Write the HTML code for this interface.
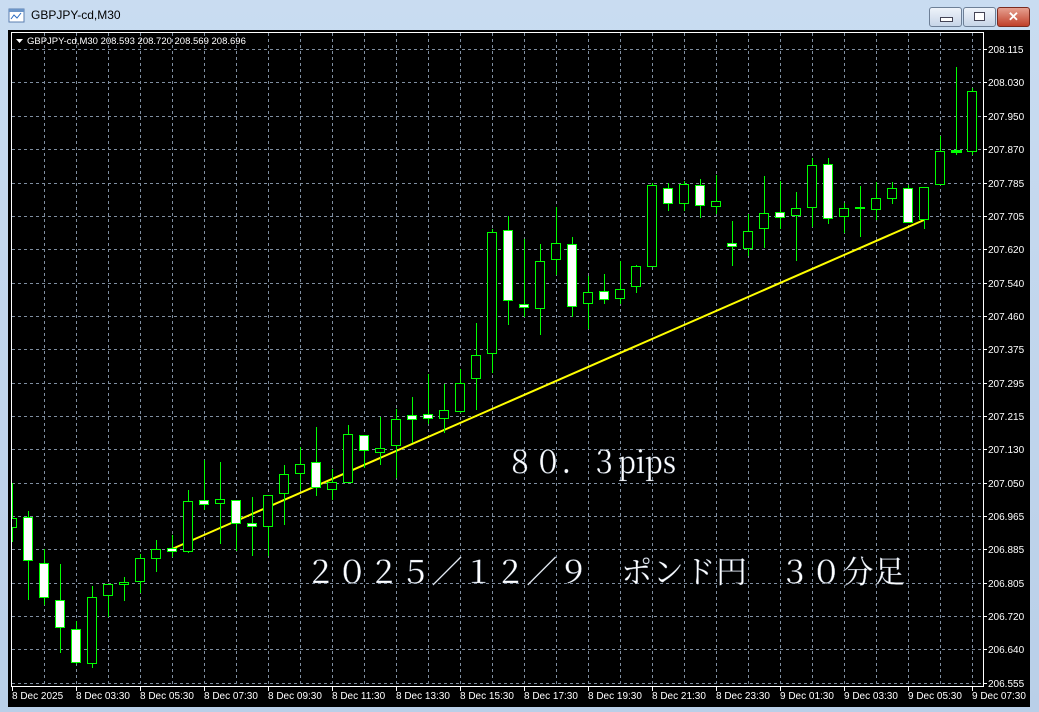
<!DOCTYPE html>
<html><head><meta charset="utf-8"><style>
html,body{margin:0;padding:0;width:1039px;height:712px;overflow:hidden;background:#bfd4ec;font-family:"Liberation Sans",sans-serif}
.win{position:absolute;left:0;top:0;width:1039px;height:712px;background:linear-gradient(#c9dcf1,#b9cfe8)}
.title{position:absolute;left:31px;top:8px;font-size:12px;color:#000}
.btn{position:absolute;top:7px;height:18px;border:1px solid #6d7f96;border-radius:3px;background:linear-gradient(#eef3fa,#c7d5e8)}
svg{position:absolute;left:0;top:0}
</style></head><body>
<div class="win"></div>
<svg width="20" height="20" style="left:8px;top:7px"><rect x="1" y="2" width="15" height="13" fill="#fff" stroke="#5b7fb0"/><rect x="1" y="2" width="15" height="3" fill="#6c95c8"/><path d="M3 12 L6 8 L9 11 L13 6" stroke="#2a6bc1" fill="none"/></svg>
<div class="title">GBPJPY-cd,M30</div>
<div class="btn" style="left:929px;width:31px"><div style="position:absolute;left:10px;top:9px;width:11px;height:3px;background:#fff;border:1px solid #445"></div></div>
<div class="btn" style="left:963px;width:31px"><div style="position:absolute;left:10px;top:4px;width:9px;height:7px;background:#fff;border:1px solid #445"></div></div>
<div class="btn" style="left:997px;width:31px;background:linear-gradient(#e6a090,#c0402a);border-color:#7a2b20;color:#fff;font-weight:bold;font-size:13px;text-align:center;line-height:17px">✕</div>
<svg width="1039" height="712" xmlns="http://www.w3.org/2000/svg">
<rect x="8" y="30" width="1022" height="677" fill="#000"/>
<defs><clipPath id="c"><rect x="12" y="33" width="971" height="653"/></clipPath></defs>
<g stroke="#7f8ea0" stroke-width="1" stroke-dasharray="3,3" fill="none" shape-rendering="crispEdges">
<path d="M12 49.5H983M12 82.5H983M12 116.5H983M12 149.5H983M12 183.5H983M12 216.5H983M12 249.5H983M12 283.5H983M12 316.5H983M12 349.5H983M12 383.5H983M12 416.5H983M12 449.5H983M12 483.5H983M12 516.5H983M12 549.5H983M12 583.5H983M12 616.5H983M12 649.5H983M12 683.5H983"/>
<path d="M44.5 33V686M76.5 33V686M108.5 33V686M140.5 33V686M172.5 33V686M204.5 33V686M236.5 33V686M268.5 33V686M300.5 33V686M332.5 33V686M364.5 33V686M396.5 33V686M428.5 33V686M460.5 33V686M492.5 33V686M524.5 33V686M556.5 33V686M588.5 33V686M620.5 33V686M652.5 33V686M684.5 33V686M716.5 33V686M748.5 33V686M780.5 33V686M812.5 33V686M844.5 33V686M876.5 33V686M908.5 33V686M940.5 33V686M972.5 33V686"/>
</g>
<rect x="11.5" y="32.5" width="972" height="654" fill="none" stroke="#fff" shape-rendering="crispEdges"/>
<g stroke="#fff" shape-rendering="crispEdges"><path d="M983 49.5h4M983 82.5h4M983 116.5h4M983 149.5h4M983 183.5h4M983 216.5h4M983 249.5h4M983 283.5h4M983 316.5h4M983 349.5h4M983 383.5h4M983 416.5h4M983 449.5h4M983 483.5h4M983 516.5h4M983 549.5h4M983 583.5h4M983 616.5h4M983 649.5h4M983 683.5h4"/>
<path d="M12.5 687v4M76.5 687v4M140.5 687v4M204.5 687v4M268.5 687v4M332.5 687v4M396.5 687v4M460.5 687v4M524.5 687v4M588.5 687v4M652.5 687v4M716.5 687v4M780.5 687v4M844.5 687v4M908.5 687v4M972.5 687v4"/></g>
<g font-family="'Liberation Sans',sans-serif" font-size="10" fill="#fff">
<text x="988" y="53">208.115</text><text x="988" y="86">208.030</text><text x="988" y="120">207.950</text><text x="988" y="153">207.870</text><text x="988" y="187">207.785</text><text x="988" y="220">207.705</text><text x="988" y="253">207.620</text><text x="988" y="287">207.540</text><text x="988" y="320">207.460</text><text x="988" y="353">207.375</text><text x="988" y="387">207.295</text><text x="988" y="420">207.215</text><text x="988" y="453">207.130</text><text x="988" y="487">207.050</text><text x="988" y="520">206.965</text><text x="988" y="553">206.885</text><text x="988" y="587">206.805</text><text x="988" y="620">206.720</text><text x="988" y="653">206.640</text><text x="988" y="687">206.555</text>
<text x="12" y="699">8 Dec 2025</text><text x="76" y="699">8 Dec 03:30</text><text x="140" y="699">8 Dec 05:30</text><text x="204" y="699">8 Dec 07:30</text><text x="268" y="699">8 Dec 09:30</text><text x="332" y="699">8 Dec 11:30</text><text x="396" y="699">8 Dec 13:30</text><text x="460" y="699">8 Dec 15:30</text><text x="524" y="699">8 Dec 17:30</text><text x="588" y="699">8 Dec 19:30</text><text x="652" y="699">8 Dec 21:30</text><text x="716" y="699">8 Dec 23:30</text><text x="780" y="699">9 Dec 01:30</text><text x="844" y="699">9 Dec 03:30</text><text x="908" y="699">9 Dec 05:30</text><text x="972" y="699">9 Dec 07:30</text>
<text x="27" y="44" font-size="9.5">GBPJPY-cd,M30  208.593 208.720 208.569 208.696</text>
</g>
<path d="M16 39h7l-3.5 4z" fill="#fff"/>
<line x1="172" y1="549" x2="924" y2="220" stroke="#ffff00" stroke-width="2"/>
<g clip-path="url(#c)" fill="#0f0" stroke="#0f0" shape-rendering="crispEdges">
<g stroke="none">
<rect x="12" y="483" width="1" height="59"/><rect x="28" y="511" width="1" height="89"/><rect x="44" y="549" width="1" height="56"/><rect x="60" y="564" width="1" height="89"/><rect x="76" y="621" width="1" height="43"/><rect x="92" y="586" width="1" height="82"/><rect x="108" y="584" width="1" height="33"/><rect x="124" y="577" width="1" height="24"/><rect x="140" y="554" width="1" height="39"/><rect x="156" y="540" width="1" height="32"/><rect x="172" y="535" width="1" height="22"/><rect x="188" y="490" width="1" height="63"/><rect x="204" y="460" width="1" height="50"/><rect x="220" y="462" width="1" height="82"/><rect x="236" y="500" width="1" height="51"/><rect x="252" y="497" width="1" height="59"/><rect x="268" y="495" width="1" height="61"/><rect x="284" y="465" width="1" height="60"/><rect x="300" y="447" width="1" height="43"/><rect x="316" y="427" width="1" height="69"/><rect x="332" y="469" width="1" height="31"/><rect x="348" y="425" width="1" height="58"/><rect x="364" y="435" width="1" height="33"/><rect x="380" y="417" width="1" height="48"/><rect x="396" y="409" width="1" height="69"/><rect x="412" y="397" width="1" height="46"/><rect x="428" y="374" width="1" height="50"/><rect x="444" y="384" width="1" height="49"/><rect x="460" y="369" width="1" height="44"/><rect x="476" y="323" width="1" height="87"/><rect x="492" y="229" width="1" height="144"/><rect x="508" y="216" width="1" height="109"/><rect x="524" y="239" width="1" height="78"/><rect x="540" y="244" width="1" height="91"/><rect x="556" y="207" width="1" height="68"/><rect x="572" y="237" width="1" height="80"/><rect x="588" y="276" width="1" height="53"/><rect x="604" y="274" width="1" height="30"/><rect x="620" y="261" width="1" height="43"/><rect x="636" y="265" width="1" height="28"/><rect x="652" y="183" width="1" height="84"/><rect x="668" y="183" width="1" height="28"/><rect x="684" y="181" width="1" height="30"/><rect x="700" y="179" width="1" height="39"/><rect x="716" y="175" width="1" height="39"/><rect x="732" y="221" width="1" height="45"/><rect x="748" y="214" width="1" height="42"/><rect x="764" y="176" width="1" height="72"/><rect x="780" y="181" width="1" height="48"/><rect x="796" y="192" width="1" height="69"/><rect x="812" y="158" width="1" height="69"/><rect x="828" y="158" width="1" height="66"/><rect x="844" y="203" width="1" height="30"/><rect x="860" y="186" width="1" height="51"/><rect x="876" y="182" width="1" height="38"/><rect x="892" y="182" width="1" height="22"/><rect x="908" y="185" width="1" height="38"/><rect x="924" y="187" width="1" height="42"/><rect x="940" y="136" width="1" height="49"/><rect x="956" y="67" width="1" height="88"/><rect x="972" y="88" width="1" height="67"/>
<rect x="951" y="150" width="11" height="3"/>
</g>
<g stroke-width="1">
<rect x="7.5" y="518.5" width="9" height="9" fill="#000"/><rect x="23.5" y="517.5" width="9" height="43" fill="#fff"/><rect x="39.5" y="563.5" width="9" height="34" fill="#fff"/><rect x="55.5" y="600.5" width="9" height="27" fill="#fff"/><rect x="71.5" y="629.5" width="9" height="33" fill="#fff"/><rect x="87.5" y="597.5" width="9" height="66" fill="#000"/><rect x="103.5" y="584.5" width="9" height="11" fill="#000"/><rect x="119.5" y="582.5" width="9" height="2" fill="#000"/><rect x="135.5" y="558.5" width="9" height="23" fill="#000"/><rect x="151.5" y="549.5" width="9" height="9" fill="#000"/><rect x="167.5" y="548.5" width="9" height="3" fill="#fff"/><rect x="183.5" y="501.5" width="9" height="50" fill="#000"/><rect x="199.5" y="500.5" width="9" height="4" fill="#fff"/><rect x="215.5" y="499.5" width="9" height="4" fill="#000"/><rect x="231.5" y="500.5" width="9" height="23" fill="#fff"/><rect x="247.5" y="523.5" width="9" height="3" fill="#fff"/><rect x="263.5" y="495.5" width="9" height="31" fill="#000"/><rect x="279.5" y="474.5" width="9" height="19" fill="#000"/><rect x="295.5" y="464.5" width="9" height="9" fill="#000"/><rect x="311.5" y="462.5" width="9" height="25" fill="#fff"/><rect x="327.5" y="482.5" width="9" height="7" fill="#000"/><rect x="343.5" y="434.5" width="9" height="48" fill="#000"/><rect x="359.5" y="435.5" width="9" height="15" fill="#fff"/><rect x="375.5" y="448.5" width="9" height="4" fill="#000"/><rect x="391.5" y="419.5" width="9" height="26" fill="#000"/><rect x="407.5" y="415.5" width="9" height="4" fill="#fff"/><rect x="423.5" y="414.5" width="9" height="4" fill="#fff"/><rect x="439.5" y="410.5" width="9" height="8" fill="#000"/><rect x="455.5" y="383.5" width="9" height="28" fill="#000"/><rect x="471.5" y="355.5" width="9" height="23" fill="#000"/><rect x="487.5" y="232.5" width="9" height="121" fill="#000"/><rect x="503.5" y="230.5" width="9" height="70" fill="#fff"/><rect x="519.5" y="304.5" width="9" height="3" fill="#fff"/><rect x="535.5" y="261.5" width="9" height="47" fill="#000"/><rect x="551.5" y="243.5" width="9" height="16" fill="#000"/><rect x="567.5" y="244.5" width="9" height="62" fill="#fff"/><rect x="583.5" y="292.5" width="9" height="11" fill="#000"/><rect x="599.5" y="291.5" width="9" height="8" fill="#fff"/><rect x="615.5" y="289.5" width="9" height="9" fill="#000"/><rect x="631.5" y="266.5" width="9" height="20" fill="#000"/><rect x="647.5" y="185.5" width="9" height="81" fill="#000"/><rect x="663.5" y="188.5" width="9" height="15" fill="#fff"/><rect x="679.5" y="184.5" width="9" height="19" fill="#000"/><rect x="695.5" y="185.5" width="9" height="20" fill="#fff"/><rect x="711.5" y="201.5" width="9" height="5" fill="#000"/><rect x="727.5" y="243.5" width="9" height="3" fill="#fff"/><rect x="743.5" y="231.5" width="9" height="17" fill="#000"/><rect x="759.5" y="213.5" width="9" height="15" fill="#000"/><rect x="775.5" y="212.5" width="9" height="5" fill="#fff"/><rect x="791.5" y="208.5" width="9" height="7" fill="#000"/><rect x="807.5" y="165.5" width="9" height="42" fill="#000"/><rect x="823.5" y="164.5" width="9" height="54" fill="#fff"/><rect x="839.5" y="208.5" width="9" height="8" fill="#000"/><rect x="855.5" y="207.5" width="9" height="1" fill="#fff"/><rect x="871.5" y="198.5" width="9" height="11" fill="#000"/><rect x="887.5" y="188.5" width="9" height="10" fill="#000"/><rect x="903.5" y="188.5" width="9" height="34" fill="#fff"/><rect x="919.5" y="187.5" width="9" height="32" fill="#000"/><rect x="935.5" y="151.5" width="9" height="33" fill="#000"/><rect x="967.5" y="91.5" width="9" height="60" fill="#000"/>
</g>
</g>
<g font-family="'Noto Serif CJK SC','Liberation Serif',serif" font-size="31" fill="#fff" stroke="#6a7a90" stroke-width="0.3">
<text x="506" y="473" textLength="170" lengthAdjust="spacingAndGlyphs">８０．３pips</text>
<text x="305" y="583" textLength="600" lengthAdjust="spacing">２０２５／１２／９　ポンド円　３０分足</text>
</g>
</svg>
</body></html>
